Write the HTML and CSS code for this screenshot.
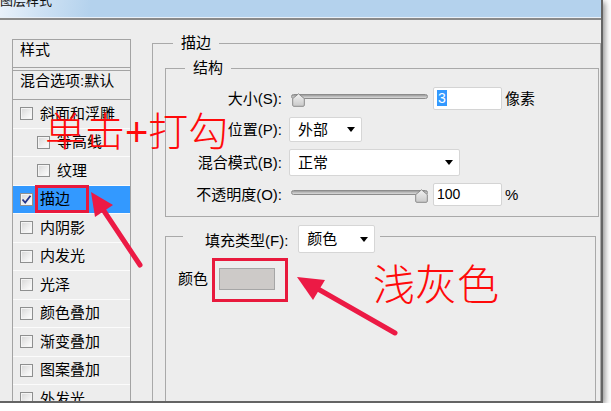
FILE: index.html
```html
<!DOCTYPE html>
<html lang="zh-CN">
<head>
<meta charset="utf-8">
<title>图层样式</title>
<link rel="stylesheet" href="styles.css">
</head>
<body>
<div class="window">
  <div class="titlebar"><span class="title">图层样式</span></div>
  <div class="main">
    <div class="styles-panel">
      <div class="panel-head">样式</div>
      <div class="panel-blend">混合选项:默认</div>
      <ul class="fx-list">
        <li class="fx"><span class="cb"></span>斜面和浮雕</li>
        <li class="fx sub"><span class="cb"></span>等高线</li>
        <li class="fx sub"><span class="cb"></span>纹理</li>
        <li class="fx active"><span class="cb"><svg width="11" height="11" viewBox="0 0 11 11"><polyline points="1.5,5.5 4.2,8.5 9.5,1.8" fill="none" stroke="#26358a" stroke-width="1.8"/></svg></span>描边</li>
        <li class="fx"><span class="cb"></span>内阴影</li>
        <li class="fx"><span class="cb"></span>内发光</li>
        <li class="fx"><span class="cb"></span>光泽</li>
        <li class="fx"><span class="cb"></span>颜色叠加</li>
        <li class="fx"><span class="cb"></span>渐变叠加</li>
        <li class="fx"><span class="cb"></span>图案叠加</li>
        <li class="fx"><span class="cb"></span>外发光</li>
      </ul>
    </div>
    <fieldset class="group outer">
      <legend class="lg-outer">描边</legend>
      <fieldset class="group struct">
        <legend class="lg-struct">结构</legend>
        <div class="form-grid">
          <label class="lbl">大小(S):</label>
          <div class="ctrl">
            <div class="slider"><div class="track"></div><svg class="thumb" style="left:calc((100% - 13px) * 0.012)" width="13" height="14" viewBox="0 0 13 14"><defs><linearGradient id="tg1" x1="0" y1="0" x2="0" y2="1"><stop offset="0" stop-color="#f2f2f2"/><stop offset="1" stop-color="#c9c9c9"/></linearGradient></defs><path d="M6.5 0.8 L12.3 5.6 L12.3 12.2 Q12.3 13.3 11.2 13.3 L1.8 13.3 Q0.7 13.3 0.7 12.2 L0.7 5.6 Z" fill="url(#tg1)" stroke="#8a8a8a" stroke-width="1"/></svg></div>
            <div class="num"><span class="sel">3</span></div>
            <span class="unit">像素</span>
          </div>
          <label class="lbl">位置(P):</label>
          <div class="ctrl">
            <div class="select sel-pos">外部<i class="caret"></i></div>
          </div>
          <label class="lbl">混合模式(B):</label>
          <div class="ctrl">
            <div class="select sel-mode">正常<i class="caret"></i></div>
          </div>
          <label class="lbl">不透明度(O):</label>
          <div class="ctrl">
            <div class="slider"><div class="track"></div><svg class="thumb" style="left:calc((100% - 13px) * 1)" width="13" height="14" viewBox="0 0 13 14"><defs><linearGradient id="tg2" x1="0" y1="0" x2="0" y2="1"><stop offset="0" stop-color="#f2f2f2"/><stop offset="1" stop-color="#c9c9c9"/></linearGradient></defs><path d="M6.5 0.8 L12.3 5.6 L12.3 12.2 Q12.3 13.3 11.2 13.3 L1.8 13.3 Q0.7 13.3 0.7 12.2 L0.7 5.6 Z" fill="url(#tg2)" stroke="#8a8a8a" stroke-width="1"/></svg></div>
            <div class="num">100</div>
            <span class="unit">%</span>
          </div>
        </div>
      </fieldset>
      <fieldset class="group fill">
        <legend class="lg-fill"><span class="fill-label">填充类型(F):</span><span class="select sel-fill">颜色<i class="caret"></i></span></legend>
        <div class="color-row"><span>颜色</span><span class="swatch"></span></div>
      </fieldset>
    </fieldset>
  </div>

  <div class="annot">
    <div class="note note-click">单击+打勾</div>
    <div class="note note-gray">浅灰色</div>
    <div class="mark mark-stroke"></div>
    <div class="mark mark-color"></div>
    <svg class="arrows" width="601" height="401" viewBox="0 0 601 401">
      <line x1="140" y1="265" x2="104" y2="211" stroke="#ec1a45" stroke-width="5" stroke-linecap="round"/>
      <polygon points="91,192 113,205 95,217" fill="#ec1a45"/>
      <line x1="395" y1="333" x2="318" y2="289" stroke="#ec1a45" stroke-width="5" stroke-linecap="round"/>
      <polygon points="297,277 325,280 313,300" fill="#ec1a45"/>
    </svg>
  </div>
</div>
</body>
</html>
```

FILE: styles.css
```css
* { box-sizing: border-box; }
html, body { margin: 0; padding: 0; background: #fff; }
body {
  font-family: "Liberation Sans", "Noto Sans CJK SC", sans-serif;
  font-size: 15px;
  color: #000;
}

.window {
  position: relative;
  width: 603px;
  height: 403px;
  background: #ededed;
  border-right: 2px solid #646464;
  border-bottom: 2px solid #646464;
  box-shadow: 2px 2px 6px rgba(0, 0, 0, 0.45);
  overflow: hidden;
}

.titlebar {
  height: 20px;
  overflow: hidden;
  background: linear-gradient(100deg, #eaf2fb 0, #cfe2f4 40px, #b4d2ed 90px, #b4d2ed 100%);
  box-shadow: inset 0 -1px 0 #e9f0f8;
  border-bottom: 2px solid #8a8a8a;
}
.title {
  display: block;
  font-family: "Noto Sans CJK SC", sans-serif;
  font-size: 13px;
  line-height: 13px;
  margin-top: -7px;
  color: #111;
}

.main {
  display: flex;
  align-items: flex-start;
}

/* left list */
.styles-panel {
  flex: none;
  width: 119px;
  height: 400px;
  margin: 19px 0 0 12px;
  border: 1px solid #a3a3a3;
  border-bottom: none;
}
.panel-head {
  height: 28px;
  padding-left: 7px;
  line-height: 20px;
  border-bottom: 1px solid #a3a3a3;
}
.panel-blend {
  height: 30px;
  margin-top: 2px;
  padding-left: 7px;
  line-height: 20px;
  border-top: 1px solid #a3a3a3;
  border-bottom: 1px solid #a3a3a3;
}
.fx-list {
  list-style: none;
  margin: 0;
  padding: 0;
}
.fx {
  display: flex;
  align-items: center;
  height: 28.5px;
  padding-left: 7px;
  border-bottom: 1px solid #fbfbfb;
  line-height: 20px;
}
.fx.sub { padding-left: 24px; }
.fx.active { background: #3399ff; }
.cb {
  flex: none;
  width: 13px;
  height: 13px;
  margin-right: 7px;
  border: 1px solid #8e8f8f;
  background: linear-gradient(135deg, #d6d6d6 0, #eeeeee 55%, #ffffff 100%);
  box-shadow: inset 0 0 0 1px #f4f4f4;
  display: flex;
  align-items: center;
  justify-content: center;
}
.cb svg { display: block; }

/* group boxes */
.group {
  margin: 0;
  min-width: 0;
  border: 1px solid #a9a9a9;
}
.group > legend {
  line-height: 20px;
}
.outer {
  flex: none;
  width: 449px;
  height: 420px;
  margin: 13px 0 0 21px;
  padding: 5px 0 0 12px;
}
.lg-outer { margin-left: 8px; padding: 0 8px; }
.struct {
  margin: 0 1px 0 0;
  padding: 9px 0 10px 0;
}
.lg-struct { margin-left: 19px; padding: 0 8px; }

.form-grid {
  display: grid;
  grid-template-columns: 116px auto;
  grid-template-rows: 23px 25px 27px 23px;
  column-gap: 7px;
  row-gap: 7px;
  align-items: center;
}
.lbl {
  text-align: right;
  line-height: 20px;
  white-space: nowrap;
}
.ctrl {
  display: flex;
  align-items: center;
  height: 100%;
}

.slider {
  position: relative;
  width: 137px;
  height: 16px;
  margin-left: 2px;
}
.track {
  margin-top: 3px;
  height: 5px;
  border: 1px solid #8c8c8c;
  border-radius: 3px;
  background: linear-gradient(#9b9b9b, #bdbdbd 50%, #dadada);
}
.thumb {
  position: absolute;
  top: 2px;
  display: block;
}

.num {
  width: 69px;
  height: 23px;
  margin-left: 5px;
  padding-left: 3px;
  background: #fff;
  border: 1px solid #d4d4d4;
  border-radius: 2px;
  font-size: 14px;
  line-height: 21px;
}
.sel {
  background: #3399ff;
  color: #fff;
  padding: 0 1px;
}
.unit {
  margin-left: 3px;
  line-height: 20px;
}

.select {
  display: flex;
  align-items: center;
  background: #fff;
  border: 1px solid #d6d6d6;
  border-radius: 2px;
  padding: 0 6px 0 8px;
  line-height: 20px;
}
.sel-pos { width: 73px; height: 25px; }
.sel-mode { width: 171px; height: 27px; }
.caret {
  margin-left: auto;
  width: 0;
  height: 0;
  border-top: 5px solid #000;
  border-left: 4.5px solid transparent;
  border-right: 4.5px solid transparent;
}

.fill {
  height: 220px;
  margin: 8px 4px 0 0;
  padding: 21px 0 0 12px;
}
.lg-fill {
  display: flex;
  align-items: flex-start;
  height: 22px;
  margin-left: 5px;
  padding: 0 5px 0 22px;
}
.fill-label {
  line-height: 28px;
  padding-top: 2px;
  margin-right: 10px;
  white-space: nowrap;
}
.sel-fill { width: 77px; height: 28px; flex: none; }

.color-row {
  display: flex;
  align-items: center;
  gap: 11px;
  line-height: 20px;
}
.swatch {
  width: 56px;
  height: 22px;
  background: #cdcac8;
  border: 1px solid #a6a6a6;
}

/* annotations */
.annot {
  position: absolute;
  left: 0;
  top: 0;
  width: 601px;
  height: 401px;
  pointer-events: none;
}
.note {
  position: absolute;
  color: #ff0a0a;
  font-family: "Liberation Sans", "Noto Sans CJK SC", sans-serif;
  font-weight: 300;
  white-space: nowrap;
}
.note-click { left: 45px; top: 112px; font-size: 40px; line-height: 40px; }
.note-gray { left: 373px; top: 265px; font-size: 42px; line-height: 42px; }
.mark {
  position: absolute;
  border: 3px solid #e8193c;
}
.mark-stroke { left: 35px; top: 185px; width: 54px; height: 28px; }
.mark-color { left: 212px; top: 258px; width: 76px; height: 44px; }
.arrows { position: absolute; left: 0; top: 0; display: block; }
```
